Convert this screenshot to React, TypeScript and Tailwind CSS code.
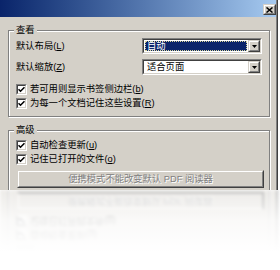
import React from "react";

function Sunken({ children, className = "" }: { children?: React.ReactNode; className?: string }) {
  return (
    <div className={`border border-t-[#808080] border-l-[#808080] border-b-white border-r-white ${className}`}>
      <div className="border border-t-[#404040] border-l-[#404040] border-b-[#d4d0c8] border-r-[#d4d0c8] h-full w-full bg-white flex">
        {children}
      </div>
    </div>
  );
}

function Raised({ children, className = "" }: { children?: React.ReactNode; className?: string }) {
  return (
    <div className={`border border-t-[#d4d0c8] border-l-[#d4d0c8] border-b-[#404040] border-r-[#404040] bg-[#d4d0c8] ${className}`}>
      <div className="border border-t-white border-l-white border-b-[#808080] border-r-[#808080] h-full w-full flex items-center justify-center">
        {children}
      </div>
    </div>
  );
}

function Arrow() {
  return (
    <svg width="5" height="3" viewBox="0 0 5 3">
      <path d="M0 0h5L2.5 3z" fill="#000" />
    </svg>
  );
}

function Dropdown({ selected, text }: { selected?: boolean; text: string }) {
  return (
    <Sunken className="w-[120px] h-[16px]">
      <div className="flex-1 p-[1px] flex">
        {selected ? (
          <div className="flex-1 bg-[#0a246a] border border-dotted border-[#d8d49a] text-white pl-[1px] flex items-center leading-[10px]">
            {text}
          </div>
        ) : (
          <div className="flex-1 pl-[2px] flex items-center leading-[10px] text-black">{text}</div>
        )}
      </div>
      <Raised className="w-[12px] h-full">
        <Arrow />
      </Raised>
    </Sunken>
  );
}

function Check() {
  return (
    <Sunken className="w-[11px] h-[11px] shrink-0">
      <div className="flex-1 flex items-center justify-center">
        <svg width="7" height="7" viewBox="0 0 7 7">
          <path d="M0.5 3.2 L2.5 5.2 L6.5 1.2" stroke="#000" strokeWidth="1.6" fill="none" />
        </svg>
      </div>
    </Sunken>
  );
}

function Key({ k }: { k: string }) {
  return (
    <>
      (<span className="underline underline-offset-[1px]">{k}</span>)
    </>
  );
}

function CheckRow({ label, k }: { label: string; k: string }) {
  return (
    <div className="h-[14px] flex items-center gap-[3px]">
      <Check />
      <span className="leading-[12px] whitespace-nowrap">
        {label}
        <Key k={k} />
      </span>
    </div>
  );
}

function GroupBox({ title, className = "", children }: { title: string; className?: string; children?: React.ReactNode }) {
  return (
    <div
      className={`relative border border-[#808080] shadow-[inset_1px_1px_0_#fff,1px_1px_0_#fff] pl-[7px] pr-[7px] ${className}`}
    >
      <span className="absolute -top-[7px] left-[5px] px-[2px] bg-[#d4d0c8] leading-[12px]">{title}</span>
      {children}
    </div>
  );
}

function CloseButton() {
  return (
    <Raised className="w-[13px] h-[11px]">
      <svg width="7" height="6" viewBox="0 0 7 6">
        <path d="M0.5 0.5 L6.5 5.5 M6.5 0.5 L0.5 5.5" stroke="#000" strokeWidth="1.5" />
      </svg>
    </Raised>
  );
}

function Window() {
  return (
    <div className="flex h-[190px] w-[280px] overflow-hidden">
      <div className="w-[276px] h-full bg-[#d4d0c8] flex flex-col overflow-hidden">
        <div className="h-[17px] shrink-0 bg-linear-to-r from-[#0a246a] to-[#a6caf0] flex justify-end items-start pt-[4px]">
          <CloseButton />
        </div>
        <div className="pl-[8px] pr-[6px] pt-[13px] flex flex-col">
          <GroupBox title="查看" className="h-[87px] pt-[7px]">
            <div className="flex items-center justify-between h-[16px]">
              <span className="leading-[12px]">
                默认布局<Key k="L" />
              </span>
              <Dropdown selected text="自动" />
            </div>
            <div className="flex items-center justify-between h-[16px] mt-[5px]">
              <span className="leading-[12px]">
                默认缩放<Key k="Z" />
              </span>
              <Dropdown text="适合页面" />
            </div>
            <div className="mt-[7px]">
              <CheckRow label="若可用则显示书签侧边栏" k="b" />
              <CheckRow label="为每一个文档记住这些设置" k="R" />
            </div>
          </GroupBox>
          <GroupBox title="高级" className="h-[90px] pt-[7px] mt-[13px]">
            <CheckRow label="自动检查更新" k="u" />
            <CheckRow label="记住已打开的文件" k="o" />
            <div className="mt-[4px] pl-[1px] pr-0">
              <Raised className="w-[247px] h-[18px]">
                <span className="text-[#808080] [text-shadow:1px_1px_0_#fff] leading-[12px] whitespace-nowrap">
                  便携模式不能改变默认 PDF 阅读器
                </span>
              </Raised>
            </div>
          </GroupBox>
        </div>
      </div>
      <div className="w-px h-full bg-[#808080]" />
      <div className="w-px h-full bg-[#404040]" />
      <div className="w-[2px] h-full bg-white" />
    </div>
  );
}

export default function App() {
  return (
    <div className="w-[280px] h-[270px] bg-white overflow-hidden text-[9.3px] text-black font-['Liberation_Sans','Noto_Sans_CJK_SC',sans-serif]">
      <Window />
      <div className="relative h-[80px] w-[280px] overflow-hidden" aria-hidden="true">
        <div className="[transform:scaleY(-1)] opacity-45 blur-[1.6px]">
          <Window />
        </div>
        <div className="absolute inset-0 bg-[linear-gradient(to_bottom,rgba(255,255,255,0.1)_0px,rgba(255,255,255,0.75)_30px,#fff_62px)]" />
      </div>
    </div>
  );
}
